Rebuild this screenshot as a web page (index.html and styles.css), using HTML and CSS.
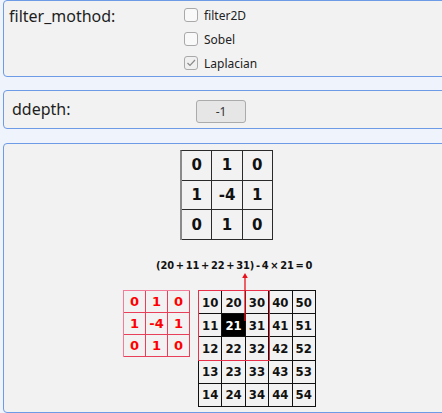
FILE: index.html
```html
<!DOCTYPE html>
<html>
<head>
<meta charset="utf-8">
<link rel="stylesheet" href="styles.css">
</head>
<body>
<div class="wrap">
  <section class="panel p1">
    <div class="label">filter_mothod:</div>
    <div class="checks">
      <div class="row"><span class="box"></span><span class="txt">filter2D</span></div>
      <div class="row"><span class="box"></span><span class="txt">Sobel</span></div>
      <div class="row"><span class="box checked"><svg width="12" height="12" viewBox="0 0 12 12"><polyline points="2.5,6 5,8.5 10,3" fill="none" stroke="#8a8a8a" stroke-width="1.2"/></svg></span><span class="txt">Laplacian</span></div>
    </div>
  </section>
  <section class="panel p2">
    <div class="label2">ddepth:</div>
    <div class="spin">-1</div>
  </section>
  <section class="panel p3">
    <div class="kernel">
      <div>0</div><div>1</div><div>0</div>
      <div>1</div><div>-4</div><div>1</div>
      <div>0</div><div>1</div><div>0</div>
    </div>
    <div class="eq">(20 + 11 + 22 + 31) - 4 × 21 = 0</div>
    <div class="lower">
      <div class="rkernel">
        <div>0</div><div>1</div><div>0</div>
        <div>1</div><div>-4</div><div>1</div>
        <div>0</div><div>1</div><div>0</div>
      </div>
      <div class="grid">
        <div>10</div><div>20</div><div>30</div><div>40</div><div>50</div>
        <div>11</div><div class="hot">21</div><div>31</div><div>41</div><div>51</div>
        <div>12</div><div>22</div><div>32</div><div>42</div><div>52</div>
        <div>13</div><div>23</div><div>33</div><div>43</div><div>53</div>
        <div>14</div><div>24</div><div>34</div><div>44</div><div>54</div>
        <span class="win"></span>
      </div>
    </div>
    <svg class="arrow" width="8" height="48" viewBox="0 0 8 48"><line x1="4" y1="3" x2="4" y2="48" stroke="#e8101a" stroke-width="1.3"/><polygon points="4,0 1.2,5 6.8,5" fill="#e8101a"/></svg>
  </section>
</div>
</body>
</html>
```

FILE: styles.css
```css
html, body {
  margin: 0;
  padding: 0;
}
body {
  background: #eef3fc;
  overflow: hidden;
  width: 442px;
  height: 413px;
  font-family: "Noto Sans", "Liberation Sans", sans-serif;
  color: #1e1e1e;
}
.wrap {
  display: flex;
  flex-direction: column;
  padding-left: 3px;
}
.panel {
  box-sizing: border-box;
  width: 446px;
  background: #f2f2f2;
  border: 1px solid #6e9be6;
  border-radius: 4px;
}
.p1 {
  height: 77px;
  display: grid;
  grid-template-columns: 175px auto;
  padding: 2px 0 0 5px;
}
.label {
  font-size: 16px;
  line-height: 24px;
  padding-top: 1px;
}
.checks {
  display: flex;
  flex-direction: column;
}
.row {
  height: 24px;
  display: flex;
  align-items: center;
}
.box {
  box-sizing: border-box;
  width: 14px;
  height: 14px;
  border: 1px solid #a9a9a9;
  border-radius: 3px;
  background: #f9f9f9;
  display: flex;
  align-items: center;
  justify-content: center;
}
.box.checked {
  background: #f0f0f0;
}
.txt {
  margin-left: 6px;
  font-size: 12px;
  color: #222;
}
.p2 {
  margin-top: 13px;
  height: 39px;
  display: grid;
  grid-template-columns: 192px 50px;
  align-items: center;
}
.label2 {
  font-size: 16px;
  padding-left: 8px;
  margin-top: -2px;
}
.spin {
  box-sizing: border-box;
  height: 23px;
  margin-top: 3px;
  border: 1px solid #ababab;
  border-radius: 3px;
  background: #e6e6e6;
  font-size: 12px;
  display: flex;
  align-items: center;
  justify-content: center;
  color: #333;
}
.p3 {
  margin-top: 14px;
  height: 270px;
  position: relative;
  padding-top: 6px;
}
.kernel {
  margin-left: 176px;
  display: grid;
  grid-template-columns: repeat(3, 30.33px);
  grid-auto-rows: 29.67px;
  width: max-content;
  border-top: 1px solid #2a2a2a;
  border-left: 2px solid #8a8a8a;
  font-family: "DejaVu Sans", sans-serif;
  font-weight: bold;
  font-size: 15px;
  color: #111;
}
.kernel div {
  border-right: 1px solid #2a2a2a;
  border-bottom: 1px solid #2a2a2a;
  display: flex;
  align-items: center;
  justify-content: center;
}
.eq {
  margin: 19px 0 0 152px;
  font-family: "DejaVu Sans Condensed", "DejaVu Sans", sans-serif;
  font-weight: bold;
  font-size: 11px;
  line-height: 14px;
  white-space: nowrap;
  word-spacing: -1.6px;
  letter-spacing: -0.1px;
  color: #111;
}
.lower {
  margin: 17px 0 0 119px;
  display: flex;
  gap: 8px;
  align-items: flex-start;
}
.rkernel {
  display: grid;
  grid-template-columns: 22px 22px 22px;
  grid-auto-rows: 22px;
  border-top: 1px solid #f37c98;
  border-left: 1px solid #f37c98;
  font-family: "DejaVu Sans", sans-serif;
  font-weight: bold;
  font-size: 13px;
  color: #f00;
}
.rkernel div {
  border-right: 1px solid #e8405a;
  border-bottom: 1px solid #e8405a;
  display: flex;
  align-items: center;
  justify-content: center;
}
.grid {
  position: relative;
  display: grid;
  grid-template-columns: repeat(5, 23.4px);
  grid-auto-rows: 23.2px;
  border-top: 1px solid #111;
  border-left: 1px solid #111;
  font-family: "DejaVu Sans Condensed", "DejaVu Sans", sans-serif;
  font-weight: bold;
  font-size: 13px;
  color: #111;
}
.grid div {
  border-right: 1px solid #111;
  border-bottom: 1px solid #111;
  display: flex;
  align-items: center;
  justify-content: center;
}
.grid .hot {
  background: #000;
  color: #fff;
}
.win {
  position: absolute;
  left: -1px;
  top: -1px;
  width: 70px;
  height: 69px;
  border: 1px solid #e8304a;
  pointer-events: none;
}
.arrow {
  position: absolute;
  left: 237px;
  top: 129px;
}
```
